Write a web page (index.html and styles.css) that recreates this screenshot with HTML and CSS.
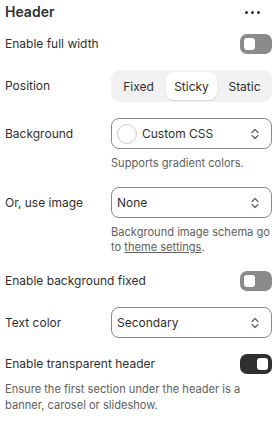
FILE: index.html
```html
<!DOCTYPE html>
<html>
<head>
<meta charset="utf-8">
<link rel="stylesheet" href="styles.css">
</head>
<body>
<div class="panel">
  <div class="title-row">
    <h2 class="title">Header</h2>
    <span class="dots"><i></i><i></i><i></i></span>
  </div>

  <div class="row">
    <span class="label">Enable full width</span>
    <span class="toggle"><span class="knob"></span></span>
  </div>

  <div class="field">
    <span class="label">Position</span>
    <div class="segmented">
      <span class="seg">Fixed</span>
      <span class="seg active">Sticky</span>
      <span class="seg">Static</span>
    </div>
  </div>

  <div class="field">
    <span class="label">Background</span>
    <div class="control">
      <div class="select">
        <span class="swatch"></span>
        <span class="value">Custom CSS</span>
        <svg class="chev" width="10" height="14" viewBox="0 0 10 14"><path d="M2 5.5 L5 2.5 L8 5.5 M2 8.5 L5 11.5 L8 8.5" fill="none" stroke="#616161" stroke-width="1.2" stroke-linecap="round" stroke-linejoin="round"/></svg>
      </div>
      <p class="help">Supports gradient colors.</p>
    </div>
  </div>

  <div class="field">
    <span class="label">Or, use image</span>
    <div class="control">
      <div class="select">
        <span class="value">None</span>
        <svg class="chev" width="10" height="14" viewBox="0 0 10 14"><path d="M2 5.5 L5 2.5 L8 5.5 M2 8.5 L5 11.5 L8 8.5" fill="none" stroke="#616161" stroke-width="1.2" stroke-linecap="round" stroke-linejoin="round"/></svg>
      </div>
      <p class="help">Background image schema go to <a class="link">theme settings</a>.</p>
    </div>
  </div>

  <div class="row">
    <span class="label">Enable background fixed</span>
    <span class="toggle"><span class="knob"></span></span>
  </div>

  <div class="field">
    <span class="label">Text color</span>
    <div class="control">
      <div class="select">
        <span class="value">Secondary</span>
        <svg class="chev" width="10" height="14" viewBox="0 0 10 14"><path d="M2 5.5 L5 2.5 L8 5.5 M2 8.5 L5 11.5 L8 8.5" fill="none" stroke="#616161" stroke-width="1.2" stroke-linecap="round" stroke-linejoin="round"/></svg>
      </div>
    </div>
  </div>

  <div class="block">
    <div class="row">
      <span class="label">Enable transparent header</span>
      <span class="toggle on"><span class="knob"></span></span>
    </div>
    <p class="help wide">Ensure the first section under the header is a banner, carosel or slideshow.</p>
  </div>

  <hr class="divider">
</div>
</body>
</html>
```

FILE: styles.css
```css
* { box-sizing: border-box; }
html, body { margin: 0; padding: 0; background: #fff; }
body {
  font-family: Inter, "Noto Sans", sans-serif;
  font-size: 12px;
  color: #303030;
}
.panel {
  padding: 2px 7px 0 5px;
  display: flex;
  flex-direction: column;
  gap: 16px;
}
.title-row {
  display: flex;
  justify-content: space-between;
  align-items: center;
  height: 20px;
  margin-bottom: -4px;
}
.title {
  margin: 0;
  font-size: 14px;
  font-weight: 600;
  line-height: 20px;
}
.dots {
  display: flex;
  gap: 3px;
  margin-right: 12px;
}
.dots i {
  width: 3px;
  height: 3px;
  border-radius: 50%;
  background: #303030;
  display: block;
}
.row {
  display: flex;
  justify-content: space-between;
  align-items: center;
  height: 20px;
}
.label { line-height: 16px; }
.toggle {
  width: 32px;
  height: 20px;
  border-radius: 7px;
  background: #8a8a8a;
  padding: 4px;
  display: flex;
}
.toggle .knob {
  width: 11px;
  height: 12px;
  border-radius: 3px;
  background: #fff;
}
.toggle.on { background: #303030; justify-content: flex-end; }
.field {
  display: grid;
  grid-template-columns: 106px 1fr;
  align-items: start;
}
.field > .label { align-self: start; padding-top: 8px; }
.segmented {
  height: 32px;
  background: #f1f1f1;
  border-radius: 9px;
  padding: 2px;
  display: grid;
  grid-template-columns: 1fr 1fr 1fr;
  gap: 2px;
}
.seg {
  display: flex;
  align-items: center;
  justify-content: center;
  border-radius: 8px;
}
.seg.active {
  background: #fff;
  box-shadow: 0 1px 1px rgba(0,0,0,0.12);
}
.control { display: flex; flex-direction: column; gap: 7px; }
.select {
  height: 31px;
  border: 1px solid #8a8a8a;
  border-radius: 8px;
  display: flex;
  align-items: center;
  padding: 0 11px 0 5px;
  gap: 5px;
}
.swatch {
  width: 20px;
  height: 20px;
  border-radius: 50%;
  border: 1px solid #c9c9c9;
  background: #fff;
  flex: none;
}
.value { flex: 1; }
.chev { flex: none; }
.help {
  margin: 0;
  font-size: 11.1px;
  line-height: 15px;
  color: #616161;
}
.link { color: #616161; text-decoration: underline; }
.block { display: flex; flex-direction: column; gap: 7px; }
.help.wide { line-height: 16px; }
.divider {
  margin: 1px 0 0;
  border: 0;
  border-top: 1px solid #e3e3e3;
}
```
